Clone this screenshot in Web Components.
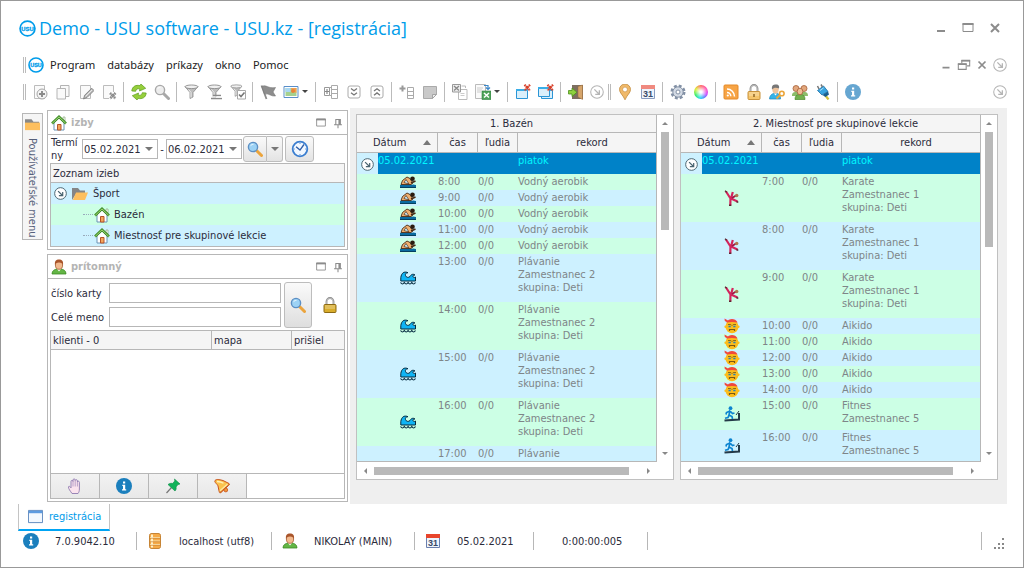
<!DOCTYPE html>
<html lang="sk">
<head>
<meta charset="utf-8">
<title>Demo - USU software</title>
<style>
  html, body { margin: 0; height: 100%; }
  body {
    --line: #b7b7b7;
    --soft: #f5f5f5;
    --sky: #cdf1ff;
    --mint: #ccffe5;
    --brand: #009cea;
    --title-font: "Open Sans", "Noto Sans", sans-serif;
    --menu-font: "Noto Sans", "Open Sans", sans-serif;
    font: 11px/13px "DejaVu Sans Condensed", "DejaVu Sans", sans-serif;
    color: #2b2b3b;
    background: #fff;
  }
</style>
</head>
<body>
<usu-window>
  <usu-titlebar slot="head" heading="Demo - USU software - USU.kz - [registrácia]"></usu-titlebar>
  <usu-menubar slot="head"></usu-menubar>
  <usu-toolbar slot="head"></usu-toolbar>
  <usu-side-tab slot="side">Používateľské menu</usu-side-tab>
  <usu-panel slot="dock" icon="house" heading="izby"><usu-rooms></usu-rooms></usu-panel>
  <usu-panel slot="dock" class="grow" icon="person" heading="prítomný"><usu-visitors></usu-visitors></usu-panel>
  <usu-schedule heading="1. Bazén" plan="pool" thumb="98"></usu-schedule>
  <usu-schedule heading="2. Miestnosť pre skupinové lekcie" plan="hall" thumb="115"></usu-schedule>
  <usu-tabs slot="foot">registrácia</usu-tabs>
  <usu-status slot="foot"></usu-status>
</usu-window>

<script>
/* ---------- icons, drawn on a 16 x 16 grid ---------- */
const page = '<path d="M2.500 1.500h10v13h-10z" fill="#fafafa" stroke="#bcbcbc"/>';
const house = '<path d="M3 8v7h10V8L8 3z" fill="#fff" stroke="#6b93b5"/><path d="M6.500 15V9.500h3.500V15z" fill="#f3a65a" stroke="#b5542a"/><path d="M12 2h2v4l-2-2z" fill="#fff" stroke="#7a9a6a" stroke-width=".6"/><path d="M1 8.500 8 1.800l7 6.700" fill="none" stroke="#3f8d28" stroke-width="2.600"/><path d="M1.300 8.300 8 1.900l6.700 6.400" fill="none" stroke="#a6d977" stroke-width="1"/>';
const calendar = top => `<path d="M1.500 1.500h13v13h-13z" fill="#eef4fc" stroke="${top[1]}"/><path d="M1 1h14v4H1z" fill="${top[0]}"/><text x="8" y="13" text-anchor="middle" font-family="Liberation Sans, sans-serif" font-weight="bold" font-size="9" fill="#3a4a66">31</text>`;
const funnel = '<path d="M1 2.500 6 8.500v6l3-1.500V8.500l5-6z" fill="#bdbdbd" stroke="#8c8c8c" stroke-width=".8"/><ellipse cx="7.500" cy="2.800" rx="6.500" ry="1.800" fill="#f0f0f0" stroke="#8c8c8c" stroke-width=".9"/><path d="M4.500 5.500 7 8.500v5" fill="none" stroke="#efefef"/>';
const lens = (f, s, h) => `<path d="m9.500 9.500 5 5" stroke="${h}" stroke-width="3" stroke-linecap="round"/><circle cx="6" cy="6" r="4.600" fill="${f}" stroke="${s}" stroke-width="1.400"/><path d="M3.200 5.500c.5-2 2-2.800 4-2.400-1.500.4-2.500 1.200-4 2.400z" fill="#fff"/>`;
const redX = '<path d="m9.500.8 5.500 5.700m0-5.700L9.500 6.500" stroke="#d8402a" stroke-width="2.200" stroke-dasharray="1.500 .4"/>';
const padlock = (f, s) => `<path d="M4.500 8V4.500a3.500 3.500 0 0 1 7 0V8" fill="none" stroke="#888" stroke-width="1.800"/><path d="M4.700 8V4.500a3.300 3.300 0 0 1 6.600 0V8" fill="none" stroke="#ddd" stroke-width=".6"/><rect x="2" y="7.500" width="12" height="8" rx="1" fill="${f}" stroke="${s}"/><path d="M3 9h10M3 11h10" stroke="#fff" stroke-opacity=".45"/>`;
const person = '<path d="M1 15c0-3.500 2.500-4.500 5-5h4c2.500.5 5 1.500 5 5z" fill="#63b545" stroke="#3c8a25" stroke-width=".8"/><path d="M6 10h4l-2 2.500z" fill="#fff"/><ellipse cx="8" cy="6" rx="3.600" ry="4.300" fill="#f2b98e" stroke="#a35a2b" stroke-width=".8"/><path d="M4 6C3.500 2 5 .6 8 .6S12.500 2 12 6c-.5-1.500-1.500-2.500-4-2.500S4.500 4.500 4 6z" fill="#a9552b"/>';
const infoDot = c => `<circle cx="8" cy="8" r="8" fill="${c}"/><path d="M7 3.500h2.200v2H7zM6.300 6.700h2.900v4.600h1V12.500H6v-1.200h1V7.900h-.7z" fill="#fff"/>`;
const chevBox = d => `<rect x="2" y="2" width="12" height="12" rx="2" fill="#fff" stroke="#aaa"/><path d="${d}" fill="none" stroke="#777" stroke-width="1.300"/>`;
const winFrame = (x, y) => `<path d="M${x}.5 ${y}.5h11v9h-11z" fill="#d9effb" stroke="#2a95d6"/><path d="M${x} ${y}h12v2h-12z" fill="#39aee8"/>`;
const ring = c => `<circle cx="8" cy="8" r="7.200" fill="#fff" stroke="${c}" stroke-width="1.200"/><path d="m5 5 5.500 5.500M10.700 6v4.700H6" fill="none" stroke="${c}" stroke-width="1.500"/>`;

const ICONS = {
  logo: '<circle cx="8" cy="8" r="7" fill="#fff" stroke="#009cea" stroke-width="1.600"/><text x="8" y="9.900" text-anchor="middle" font-family="Liberation Sans, sans-serif" font-weight="bold" font-size="5.500" fill="#009cea" stroke="#009cea" stroke-width=".3">USU</text>',
  add: page + '<circle cx="10" cy="10" r="5" fill="#f4f4f4" stroke="#a5a5a5"/><path d="M7 10h6M10 7v6" stroke="#8a8a8a" stroke-width="1.900"/>',
  copy: '<path d="M5.500 1.500h8.500v11h-8.500z" fill="#fafafa" stroke="#b4b4b4"/><path d="M2 4.500h8.500v10.500h-8.500z" fill="#fafafa" stroke="#b4b4b4"/>',
  edit: page + '<path d="m5.500 15 1.200-3.800 7-7 2.300 2.300-7 7z" fill="#b9b9b9" stroke="#808080" stroke-width=".9"/><path d="m7.500 12.500 6.500-6.500" stroke="#e8e8e8"/>',
  del: page + '<path d="M8 8h8v7H8z" fill="#fff"/><path d="m9 9 5.500 5.500m0-5.500L9 14.500" stroke="#8a8a8a" stroke-width="2.600" stroke-dasharray="1.500 .4"/>',
  refresh: '<path d="M.8 7c.3-4.500 4.200-6.500 8.200-5.300L9.900 0l4.800 4.300-6.200 2.700.4-2C6.500 4.300 5 5 4.700 7.300z" fill="#96cf3c" stroke="#5c9c1c" stroke-width=".7"/><path d="M15.200 9c-.3 4.500-4.200 6.500-8.200 5.300L6.100 16l-4.800-4.300 6.200-2.700-.4 2c2.400.7 3.900 0 4.200-2.300z" fill="#96cf3c" stroke="#5c9c1c" stroke-width=".7"/>',
  lensGrey: lens('#ededed', '#a8a8a8', '#a8a8a8'),
  lens: lens('#9cd2f5', '#5c8fc4', '#eba43c'),
  funnel,
  funnelLines: funnel + '<path d="M6 11.500h8M4 14.500h11" stroke="#8a8a8a" stroke-width="1.500"/><path d="M5 13h10" stroke="#fff"/>',
  funnelCheck: `<g transform="scale(.85)">${funnel}</g><path d="M7.500 6.500h8v8.500h-8z" fill="#fff" stroke="#a8a8a8"/><path d="m9 10.500 2 2 3.500-4" fill="none" stroke="#777" stroke-width="1.600"/>`,
  flag: '<path d="M1.500 1.500 6.500 15" stroke="#8b8b8b" stroke-width="1.800"/><path d="M1.800 2.500C6 0 8 5 15.500 3.500L13 8l2.500 4c-4 .8-6.500-3-11-2z" fill="#8d8d8d" stroke="#777" stroke-width=".6"/>',
  picture: '<path d="M1 2.500h14v11H1z" fill="#fff" stroke="#5a8fc9"/><path d="M2.500 4h11v8h-11z" fill="#a5d18f"/><path d="M2.500 4h5v4h-5z" fill="#a9d7f2"/><path d="M8 4h5.500v5L9 7z" fill="#f0a050"/><circle cx="10" cy="7" r="2" fill="#e9843a"/>',
  tree: '<path d="M8.500 1.500h6v13h-6zM8.500 5.500h6M8.500 9.500h6" fill="#fff" stroke="#aaa"/><path d="M1.500 3.500h5v8h-5z" fill="#fff" stroke="#999"/><path d="M4 5v5M2 7.500h4" stroke="#888" stroke-width="1.200"/><path d="M6.500 3.500h2M6.500 11.500h2" stroke="#aaa"/>',
  chevDown: chevBox('m5 4.500 3 2.300 3-2.300M5 8.700 8 11l3-2.300'),
  chevUp: chevBox('m5 7 3-2.300L11 7M5 11.200l3-2.300 3 2.300'),
  addRow: '<path d="M3.500 1.500v6M.5 4.500h6" stroke="#999" stroke-width="2"/><path d="M8.500 3.500h6v11h-6zM8.500 7.500h6M8.500 11.500h6" fill="#fff" stroke="#aaa"/>',
  note: '<path d="M1.500 2.500h13v8l-4 4h-9z" fill="#c9c9c9" stroke="#aaa"/><path d="M14.500 10.500h-4v4z" fill="#eee" stroke="#a5a5a5"/>',
  exportGrey: '<path d="M6.500 5.500h8.500v10h-8.500z" fill="#fff" stroke="#bbb"/><path d="M.5.500h8v7.500h-8z" fill="#eee" stroke="#999"/><path d="m2 2 5 4.500m0-4.500L2 6.500" stroke="#888" stroke-width="1.300"/><path d="M9.500 2h4v2" fill="none" stroke="#bbb"/><path d="M8.500 9.500h4M8.500 11.500h4" stroke="#ccc"/>',
  excel: '<path d="M.5.500h10v14H.5z" fill="#fafafa" stroke="#bbb"/><path d="M2 4h6M2 6h5M2 8h4" stroke="#ccc"/><path d="M7 7h9v8.500H7z" fill="#4fa35a" stroke="#2f8040" stroke-width=".6"/><path d="m9 9 5 4.500m0-4.500-5 4.500" stroke="#fff" stroke-width="1.500"/><path d="M9 1.500h4V5M11 3.500 13 5.500 15 3.500" fill="none" stroke="#3a86c8" stroke-width="1.200"/>',
  closeWin: winFrame(1, 5) + redX,
  closeAll: winFrame(3, 5) + winFrame(0, 3) + redX,
  door: '<path d="M4 1h11v14H4z" fill="#7d6e60"/><path d="m10 2.500 4.500-1.500v14.500L10 13z" fill="#d6a56b" stroke="#9a6b3a" stroke-width=".5"/><path d="M.5 6.500H4V4l5 4.300-5 4.200v-2.500H.5z" fill="#8ed13f" stroke="#4c8f1a" stroke-width=".8"/>',
  ring: ring('#b5b5b5'),
  ringDark: ring('#4a6470'),
  pin: '<path d="M8 15.800C6 11 2.500 9 2.500 5.500a5.500 5.500 0 0 1 11 0C13.500 9 10 11 8 15.800z" fill="#f0b96a" stroke="#c28a3c" stroke-width=".8"/><circle cx="8" cy="5.500" r="2.400" fill="#fff" stroke="#c28a3c" stroke-width=".6"/>',
  calendarSoft: calendar(['#f08a80', '#8a9cc0']),
  calendar: calendar(['#e8452c', '#6a7fae']),
  gear: '<circle cx="8" cy="8" r="6.300" fill="none" stroke="#8290a5" stroke-width="2.400" stroke-dasharray="2.900 2.050"/><circle cx="8" cy="8" r="5.200" fill="#d3dae4" stroke="#8290a5"/><circle cx="8" cy="8" r="2" fill="#fff" stroke="#8290a5"/>',
  wheel: '<foreignObject width="16" height="16"><div style="width:14px;height:14px;margin:1px;border-radius:50%;background:radial-gradient(circle,#fff 10%,#fff0 65%),conic-gradient(#f66,#f5b 60deg,#c4f 110deg,#58f 150deg,#2de 190deg,#3e6 240deg,#de3 300deg,#f66)"></div></foreignObject>',
  rss: '<rect x="1" y="1" width="14" height="14" rx="1" fill="#f7a445" stroke="#e58a28"/><path d="M4 8.500A3.800 3.800 0 0 1 7.800 12.300M4 5a7.500 7.500 0 0 1 7.500 7.500" fill="none" stroke="#fff" stroke-width="1.500"/><circle cx="4.800" cy="11.500" r="1.100" fill="#fff"/>',
  lockSoft: padlock('#f5c56c', '#c8923c') + '<path d="M8 10v3" stroke="#8a6020" stroke-width="1.400"/>',
  lockGold: padlock('#d9ad2c', '#8c6a14'),
  userKey: '<path d="M.5 15c0-3 2-5 4-5.500h4c2 .5 3 2.500 3 5.500z" fill="#35b3e8" stroke="#1d86bd" stroke-width=".7"/><path d="m5 9.500 1.500 2L8 9.500z" fill="#fff"/><ellipse cx="6.500" cy="5.500" rx="3.200" ry="4" fill="#eec39c"/><path d="M3 5.500C2.500 1.500 4 .5 7 .5s3.500 2 3 4C8 3.500 5 3 3 5.500z" fill="#777"/><circle cx="12.800" cy="9.500" r="2.300" fill="#fff" stroke="#eba53a" stroke-width="1.600"/><path d="m11 11-3.500 3.500" stroke="#eba53a" stroke-width="2"/>',
  group: '<path d="M0 12c0-3 1-4 4-4s4 1 4 4zM8 12c0-3 1-4 4-4s4 1 4 4z" fill="#8cbc6a"/><circle cx="4" cy="4.500" r="3" fill="#e3a77c" stroke="#a5603a" stroke-width=".8"/><circle cx="12" cy="4.500" r="3" fill="#e3a77c" stroke="#a5603a" stroke-width=".8"/><path d="M3 15.500c0-3.500 1.500-5 5-5s5 1.500 5 5z" fill="#73b04e" stroke="#4d8a2e" stroke-width=".7"/><ellipse cx="8" cy="7.500" rx="2.800" ry="3.300" fill="#f0bd94" stroke="#a5603a" stroke-width=".8"/>',
  plug: '<path d="m10 11 3.500 4.500" stroke="#d6c23a" stroke-width="2.200"/><path d="m2.500 6.500 6-4.500 4.500 5.500-6 3.500z" fill="#3aa6e0" stroke="#1d6fa5" stroke-width=".8"/><path d="M4 5 2.500 2M7.500 3 6 .5" stroke="#777" stroke-width="1.500"/><path d="m7.500 11 5.500-3.500 1 3-3.500 2.500z" fill="#1a5f8e"/><path d="m5 6.500 3.500-2.500" stroke="#b5e2fa"/>',
  infoSoft: infoDot('#66a6d1'),
  info: infoDot('#1b7fbd'),
  house, person,
  folder: '<path d="M0 2.500h7L9 5h6v3H0z" fill="#888"/><path d="M0 6h16v8H0z" fill="#fdbf5e"/>',
  folderOpen: '<path d="M0 2h6l2 2.500h5V8H4l-4 6z" fill="#858585"/><path d="M4 6.500h12L13 14H.8z" fill="#fdbf5e"/>',
  clock: '<circle cx="8" cy="8" r="6.500" fill="#f2f8ff" stroke="#3c7fd0" stroke-width="1.600"/><path d="m4.500 6 3.500 3 3.500-5" fill="none" stroke="#2f5ea8" stroke-width="1.200"/><path d="M8 2.500v1M8 12.500v1M2.500 8h1M12.500 8h1" stroke="#6d9cd8"/>',
  max: '<path d="M3 3.500h10v8H3z" fill="none" stroke="#8c8c8c" stroke-width="1"/><path d="M2.500 3h11v2h-11z" fill="#8c8c8c"/>',
  min: '<path d="M4 10h8v2H4z" fill="#8c8c8c"/>',
  restore: '<path d="M5.500 6V3h9v6h-3M1.500 7h9v6h-9z" fill="none" stroke="#8c8c8c" stroke-width="1.200"/><path d="M5 2h10v2H5zM1 6h10v2H1z" fill="#8c8c8c"/>',
  close: '<path d="m4 4 8 8m0-8-8 8" stroke="#8c8c8c" stroke-width="2"/>',
  tack: '<path d="M5.500 4h5v6h-5zM3.500 10h9M8 10v4" fill="none" stroke="#8c8c8c" stroke-width="1.200"/><path d="M8.500 3.500H11V10H8.500z" fill="#8c8c8c"/>',
  hand: '<path d="M5 15.500C3 12.500 1.500 11 1.500 9c0-1.200 1.500-.8 2.500.8V3.500c0-1.500 2-1.500 2 0V2c0-1.500 2.200-1.500 2.200 0v.5c.3-1.300 2.200-1 2.200.3V4c.3-1.200 2-1 2 .3V11c0 2-.6 3.500-1.400 4.500z" fill="#fbe3ee" stroke="#8e7bb0" stroke-width=".9"/><path d="M6 3.500V8.500M8.200 2.500v6M10.400 4v4.500" stroke="#a893c0" stroke-width=".8"/>',
  greenPin: '<path d="m6.500 9.500-5 5.500" stroke="#777" stroke-width="1.200"/><path d="m9.500 1 5.500 5-2 .5-2 2.500c.5 1.500 0 3-1 4L3 6.500C4.500 5.500 6 5 7.500 5.500L9.800 3z" fill="#12b35a" stroke="#0c8a44" stroke-width=".6"/>',
  bell: '<path d="M1 2.500C3 .5 6.500 2 9 2.500l6 3c.8.600.5 1.500-.5 2L7 14.500c-1 .6-1.800.3-1.800-.8L4 8C3.500 6 0 4.500 1 2.500z" fill="#fbc24c" stroke="#c9541d" stroke-width="1"/><path d="M14.800 6.500 6 14.500" stroke="#c9541d" stroke-width="1"/><path d="m13.500 6.200-7.500 6.500" stroke="#fbe9a0" stroke-width="1.500"/><path d="M3 3.500c2.500 0 4.500.5 6.500 1.800" stroke="#fff0b8" stroke-width="1.300" fill="none"/><circle cx="11.800" cy="12" r="1.900" fill="#f0953a" stroke="#c9541d" stroke-width=".8"/>',
  pageWin: '<path d="M.5 1.500h15v13H.5z" fill="#f3f8fe" stroke="#5c86bd"/><path d="M1 2h14v2.500H1z" fill="#5d9be0"/>',
  db: '<path d="M2.500 2.500c0-1.500 1-2 2.500-2h6c1.500 0 2.500.5 2.500 2v11c0 1.500-1 2-2.500 2H5c-1.500 0-2.500-.5-2.500-2z" fill="#f6ab48" stroke="#c07a28" stroke-width=".9"/><path d="M3 4.500h10M3 8h10M3 11.500h10" stroke="#fbe3ae"/><path d="M5 1.500v13" stroke="#fff0c8" stroke-width="2"/><path d="M3 5.300h10M3 8.800h10M3 12.300h10" stroke="#c98332" stroke-width=".7"/>',
  swimmer: '<path d="M0 11c2-.8 3.500-.8 5.300 0 1.800-.8 3.500-.8 5.300 0 1.800-.8 3.500-.8 5.400 0v3H0z" fill="#0a6aa0"/><path d="M0 13.500h16" stroke="#06405f"/><path d="m1 10.500 1.500-4L7 3l3 1.500L13 9l-2 1.500z" fill="#f0b070" stroke="#4a2a14" stroke-width=".9"/><path d="m4 8.500 2-3 3 4.500z" fill="#cdf1ff" stroke="#4a2a14" stroke-width=".7"/><path d="m11 9 4.500-2" stroke="#4a2a14" stroke-width="1.500"/><circle cx="12.500" cy="4.800" r="2.300" fill="#2a1a10"/>',
  wave: '<path d="M.8 11V7.500C1.500 3 4 1 8 2.700 6 2.700 5 4 5.500 5.500 6 7.500 8.500 8 10 6.500c1-2 3-3 5-1.500-2-.2-2.500 1-1.800 2 .7.800 1.600.5 2.300 0V11z" fill="#10b4f4" stroke="#062c40" stroke-width="1"/><path d="M.5 12.500c1.500 2 2.500 2 3.800 0 1.300 2 2.500 2 3.800 0 1.200 2 2.500 2 3.700 0 1.200 2 2.400 2 3.700 0" fill="none" stroke="#062c40" stroke-width="1.200"/>',
  kick: '<path d="M2 1.500 6.500 8.500 6.300 15.500M7 8.500l1.800-6.500M7 8.500l6.500 3" fill="none" stroke="#d4245c" stroke-width="2.200"/><path d="M1 .8l1.800 1.500M5 15.300h2.300M12.500 11.500l1.800.8" stroke="#5a2630" stroke-width="1.400"/><path d="m8 8 4-2.500" stroke="#a01846" stroke-width="2"/><circle cx="12.700" cy="5.500" r="1.700" fill="#b07850"/>',
  fighter: '<circle cx="8" cy="8.700" r="6.500" fill="#fcbd1c"/><circle cx="1.700" cy="8.700" r="1.300" fill="#fcbd1c"/><circle cx="14.300" cy="8.700" r="1.300" fill="#fcbd1c"/><path d="M2.300 4.500C3.500 2 6 1 8 1s4.500 1 5.700 3.500C10 3.700 6 3.700 2.300 4.500z" fill="#f0483c"/><path d="M.5.500 4 2.500 3.500 4.500.8 3z" fill="#f0483c"/><path d="M4 6.500h2.800l.8 1M12 6.500H9.200l-.8 1" fill="none" stroke="#8a6a1a" stroke-width="1"/><path d="M4.500 8.500h2.200M9.300 8.500h2.200" stroke="#2684b8" stroke-width="1.600"/><path d="M5.500 13v-1.500h5V13" fill="none" stroke="#7a5812" stroke-width="1.200"/>',
  treadmill: '<path d="M.5 14.500 15 13.500V7" fill="none" stroke="#243a48" stroke-width="2"/><path d="m12 9 3-4" stroke="#243a48"/><circle cx="6.500" cy="2.200" r="1.900" fill="#0c84d0"/><path d="M6 4.500 5 9l3 1.500.5 2.500M5.200 8.500 4 11.500l-3 .8M6 5 2.500 6.500 2 8.500M6.500 5.500 8.500 7.500l2-.5" fill="none" stroke="#0c84d0" stroke-width="1.700"/>',
};

/* ---------- base class: template in an open shadow root ---------- */
class Base extends HTMLElement {
  connectedCallback() {
    if (this.shadowRoot) return;
    const t = document.createElement('template');
    t.innerHTML = `<style>
      *, *::before, *::after { box-sizing: border-box; }
      :host { display: block; }
      button { font: inherit; color: inherit; margin: 0; padding: 0; border: 0; background: none; display: grid; place-items: center; }
      input { font: inherit; color: inherit; min-width: 0; margin: 0; border: 1px solid var(--line); border-radius: 0; background: #fff; padding: 0 2px; outline: 0; }
      ul { list-style: none; margin: 0; padding: 0; }
      table { border-collapse: separate; border-spacing: 0; table-layout: fixed; width: 100%; }
      th { font-weight: normal; } th, td { padding: 0; }
      ${this.css()}</style>${this.html()}`;
    this.attachShadow({ mode: 'open' }).append(t.content.cloneNode(true));
  }
  css() { return ''; }
  html() { return '<slot></slot>'; }
}
const icon = (name, size = 16) => `<usu-icon name="${name}" size="${size}"></usu-icon>`;

customElements.define('usu-icon', class extends Base {
  css() {
    const s = this.getAttribute('size') || 16;
    return `:host { display: block; flex: none; width: ${s}px; height: ${s}px; } svg { display: block; width: 100%; height: 100%; }`;
  }
  html() { return `<svg viewBox="0 0 16 16" aria-hidden="true">${ICONS[this.getAttribute('name')]}</svg>`; }
});

customElements.define('usu-window', class extends Base {
  css() { return `
    :host { display: flex; flex-direction: column; height: 100%; box-sizing: border-box; border: 1px solid #999; background: #fff; overflow: hidden; }
    main { flex: 1; min-height: 0; display: flex; padding: 0 16px 0 21px; }
    .dock { flex: none; width: 301px; margin: 2px 2px 2px 4px; display: flex; flex-direction: column; gap: 4px; }
    ::slotted(.grow) { flex: 1; min-height: 0; }
    .mdi { flex: 1; min-width: 0; display: grid; grid-template-columns: 1fr 1fr; gap: 6px; padding: 6px 9px 24px 6px; background: #efefef; }`; }
  html() { return `<header><slot name="head"></slot></header>
    <main><slot name="side"></slot><div class="dock"><slot name="dock"></slot></div><div class="mdi"><slot></slot></div></main>
    <footer><slot name="foot"></slot></footer>`; }
});

customElements.define('usu-titlebar', class extends Base {
  css() { return `
    :host { display: flex; align-items: center; height: 54px; padding: 0 20px 0 18px; }
    h1 { flex: 1; margin: 0 0 0 3px; font: 18px/24px var(--title-font); color: var(--brand); white-space: nowrap; }
    div { display: flex; gap: 11px; }`; }
  html() { return `${icon('logo', 17)}<h1>${this.getAttribute('heading')}</h1>
    <div><button aria-label="Minimalizovať">${icon('min')}</button><button aria-label="Maximalizovať">${icon('max')}</button><button aria-label="Zavrieť">${icon('close')}</button></div>`; }
});

customElements.define('usu-menubar', class extends Base {
  css() { return `
    :host { display: flex; align-items: center; height: 20px; padding: 0 16px 0 22px; }
    i { width: 3px; height: 16px; border: solid #bbb; border-width: 0 1px; margin-right: 2px; }
    nav { flex: 1; display: flex; gap: 12px; margin-left: 6px; font: 11px/16px var(--menu-font); color: #222; }
    div { display: flex; gap: 4px; align-items: center; }`; }
  html() { return `<i></i>${icon('logo')}<nav>${['Program', 'databázy', 'príkazy', 'okno', 'Pomoc'].map(t => `<button>${t}</button>`).join('')}</nav>
    <div><button aria-label="Minimalizovať">${icon('min', 14)}</button><button aria-label="Obnoviť">${icon('restore', 14)}</button><button aria-label="Zavrieť">${icon('close', 14)}</button><button aria-label="Viac">${icon('ring', 14)}</button></div>`; }
});

customElements.define('usu-toolbar', class extends Base {
  css() { return `
    :host { display: flex; align-items: center; height: 33px; padding: 0 16px 0 20px; }
    button { flex: none; width: 23px; height: 23px; }
    button.drop { width: 33px; grid-template-columns: 23px 10px; }
    button.drop::after { content: ""; border: solid transparent; border-width: 3px 3px 0; border-top-color: #444; margin-right: 4px; }
    button.end { width: 19px; }
    .sep { flex: none; width: 1px; height: 20px; margin: 0 3px; background: #bbb; }
    .grip { flex: none; width: 3px; height: 16px; margin: 0 2px; border: solid #bbb; border-width: 0 1px; }
    button:last-child { width: auto; margin-left: auto; }`; }
  html() {
    const tools = '= add copy edit del | refresh lensGrey | funnel funnelLines funnelCheck | flag picture* | tree chevDown chevUp | addRow note | exportGrey excel* | closeWin closeAll | door ring^ = pin calendarSoft | gear wheel | rss lockSoft userKey group plug | infoSoft ring^';
    return tools.split(' ').map(t => {
      if (t === '|') return '<span class="sep"></span>';
      if (t === '=') return '<span class="grip"></span>';
      const name = t.replace(/[*^]/, '');
      const cls = t.endsWith('*') ? 'drop' : t.endsWith('^') ? 'end' : '';
      return `<button class="${cls}" aria-label="${name}">${icon(name, cls === 'end' ? 14 : 16)}</button>`;
    }).join('');
  }
});

customElements.define('usu-side-tab', class extends Base {
  css() { return `
    :host { flex: none; width: 21px; margin-top: 5px; }
    button { width: 21px; display: flex; flex-direction: column; align-items: center; gap: 6px; padding: 3px 0 2px; border: 1px solid var(--line); background: var(--soft); color: #55607a; }
    span { writing-mode: vertical-rl; white-space: nowrap; }`; }
  html() { return `<button>${icon('folder', 15)}<span><slot></slot></span></button>`; }
});

customElements.define('usu-panel', class extends Base {
  css() { return `
    :host { display: flex; flex-direction: column; border: 1px solid var(--line); }
    header { flex: none; display: flex; align-items: center; height: 24px; padding: 0 2px 0 3px; border-bottom: 1px solid var(--line); }
    h2 { flex: 1; margin: 0 0 0 4px; font-size: 11px; line-height: 16px; color: #b4b4b4; }
    header button { margin-left: 3px; }
    slot { display: flex; flex-direction: column; flex: 1; min-height: 0; }`; }
  html() { return `<header>${icon(this.getAttribute('icon'))}<h2>${this.getAttribute('heading')}</h2>
    <button aria-label="Maximalizovať">${icon('max', 14)}</button><button aria-label="Pripnúť">${icon('tack', 14)}</button></header><slot></slot>`; }
});

customElements.define('usu-date', class extends Base {
  css() { return `
    :host { display: flex; height: 20px; border: 1px solid var(--line); box-sizing: border-box; }
    input { flex: 1; border: 0; padding: 0 0 0 1px; }
    button { width: 16px; }
    button::after { content: ""; border: solid transparent; border-width: 4px 4px 0; border-top-color: #777; }`; }
  html() { return `<input aria-label="${this.getAttribute('label')}" value="${this.getAttribute('value')}"><button aria-label="Kalendár"></button>`; }
});

customElements.define('usu-rooms', class extends Base {
  css() { return `
    form { display: flex; height: 28px; align-items: center; padding: 0 0 0 3px; }
    label { width: 31px; word-break: break-all; line-height: 13px; }
    usu-date { width: 76px; }
    b { font-weight: normal; width: 8px; text-align: center; }
    .split { display: flex; margin-left: 1px; }
    button.push { width: 29px; height: 26px; border: 1px solid #bdbdbd; border-radius: 3px; background: linear-gradient(#fafafa, #e3e3e3); }
    .split .push { width: 24px; border-radius: 3px 0 0 3px; }
    .split .more { width: 16px; border-left: 0; border-radius: 0 3px 3px 0; }
    .more::after { content: ""; border: solid transparent; border-width: 4px 4px 0; border-top-color: #777; }
    .clock { margin-left: 2px; }
    .frame { margin: 0 2px 2px; border: 1px solid var(--line); }
    th { height: 19px; text-align: left; padding: 0 2px; background: var(--soft); border-bottom: 1px solid var(--line); }
    td { height: 21px; background: var(--sky); }
    tr:nth-child(2) td { background: var(--mint); }
    td div { display: flex; align-items: center; gap: 4px; padding-left: 43px; }
    td div::before { content: ""; width: 10px; margin: 0 -3px 0 -11px; border-top: 1px dotted #9ab; }
    td div.root { padding-left: 3px; gap: 5px; }
    td div.root::before { display: none; }`; }
  html() { return `<form><label>Termíny</label><usu-date label="Termíny od" value="05.02.2021"></usu-date><b>-</b><usu-date label="Termíny do" value="06.02.2021"></usu-date>
    <span class="split"><button type="button" class="push" aria-label="Hľadať">${icon('lens')}</button><button type="button" class="push more" aria-label="Možnosti"></button></span>
    <button type="button" class="push clock" aria-label="Čas">${icon('clock', 18)}</button></form>
    <div class="frame"><table><thead><tr><th>Zoznam izieb</th></tr></thead><tbody>
      <tr><td><div class="root">${icon('ringDark', 13)}${icon('folderOpen')}Šport</div></td></tr>
      <tr><td><div>${icon('house')}Bazén</div></td></tr>
      <tr><td><div>${icon('house')}Miestnosť pre skupinové lekcie</div></td></tr></tbody></table></div>`; }
});

customElements.define('usu-visitors', class extends Base {
  css() { return `
    :host { display: flex; flex-direction: column; flex: 1; min-height: 0; }
    form { display: grid; grid-template-columns: 55px 1fr 28px 30px; grid-template-rows: 20px 20px; gap: 4px 3px; align-items: center; padding: 4px 2px 3px 3px; }
    form input { height: 20px; }
    label { white-space: nowrap; }
    .find { grid-area: 1 / 3 / 3 / 4; height: 46px; border: 1px solid #bdbdbd; border-radius: 3px; background: linear-gradient(#fafafa, #dedede); }
    .lock { grid-area: 1 / 4 / 3 / 5; justify-self: center; }
    .frame { flex: 1; min-height: 0; display: flex; flex-direction: column; margin: 0 2px; border: 1px solid var(--line); }
    th { height: 19px; text-align: left; padding: 0 2px; background: var(--soft); border: solid var(--line); border-width: 0 1px 1px 0; }
    th:last-child { border-right: 0; }
    .name { width: 161px; } .card { width: 80px; }
    .bar { display: flex; margin: 0 2px 2px; border: solid var(--line); border-width: 0 1px 1px; }
    .bar button { width: 49px; height: 24px; border-right: 1px solid var(--line); background: linear-gradient(#f2f2f2, #e8e8e8); }`; }
  html() { return `<form>
      <label for="card">číslo karty</label><input id="card">
      <label for="name">Celé meno</label><input id="name">
      <button type="button" class="find" aria-label="Hľadať">${icon('lens')}</button>
      <button type="button" class="lock" aria-label="Zamknúť">${icon('lockGold')}</button></form>
    <div class="frame"><table><thead><tr><th class="name">klienti - 0</th><th class="card">mapa</th><th>prišiel</th></tr></thead></table></div>
    <div class="bar">${['hand', 'info', 'greenPin', 'bell'].map(n => `<button aria-label="${n}">${icon(n)}</button>`).join('')}</div>`; }
});

/* ---------- schedules ---------- */
const repeat = (from, to, ic, lines) => Array.from({ length: to - from + 1 }, (_, i) => [`${from + i}:00`, ic, lines]);
const PLANS = {
  pool: [...repeat(8, 12, 'swimmer', ['Vodný aerobik']), ...repeat(13, 16, 'wave', ['Plávanie', 'Zamestnanec 2', 'skupina: Deti']), ['17:00', '', ['Plávanie']]],
  hall: [...repeat(7, 9, 'kick', ['Karate', 'Zamestnanec 1', 'skupina: Deti']), ...repeat(10, 14, 'fighter', ['Aikido']), ...repeat(15, 16, 'treadmill', ['Fitnes', 'Zamestnanec 5'])],
};

customElements.define('usu-schedule', class extends Base {
  css() { return `
    :host { display: grid; grid-template: minmax(0, 1fr) 17px / minmax(0, 1fr) 16px; min-height: 0; border: 1px solid #c0c0c0; background: #fff; color: #7e8588; box-sizing: border-box; }
    .view { overflow: hidden; border: solid var(--line); border-width: 0 1px 1px 0; }
    th { color: #2b2b3b; background: var(--soft); border: solid var(--line); border-width: 0 1px 1px 0; height: 20px; }
    th:last-child { border-right: 0; padding-left: 10px; }
    .caption th { height: 18px; }
    .date { display: flex; align-items: center; justify-content: space-between; padding: 0 6px 0 16px; }
    .date::after { content: ""; border: solid transparent; border-width: 0 4px 5px; border-bottom-color: #777; }
    td { vertical-align: top; padding-top: 1px; background: var(--mint); }
    tr:nth-child(odd) td { background: var(--sky); }
    td.pic { vertical-align: middle; padding: 0; }
    td.pic usu-icon { margin: 0 auto; }
    .l1 td { height: 16px; } .l2 td { height: 32px; } .l3 td { height: 48px; }
    tbody .day td { height: 21px; color: #00f6ff; background: #0082c8; }
    tbody .day td.knob { background: var(--sky); vertical-align: middle; padding-left: 4px; }
    .c0 { width: 21px; } .c1 { width: 60px; } .c2, .c3 { width: 40px; }
    .v, .h { display: flex; align-items: center; }
    .v { flex-direction: column; }
    .v::before, .v::after, .h::before, .h::after { content: ""; flex: none; border: 3px solid transparent; }
    .v::before { border-top-width: 0; border-bottom-color: #888; margin: 7px 0; }
    .v::after { border-bottom-width: 0; border-top-color: #888; margin: 7px 0; }
    .h::before { border-left-width: 0; border-right-color: #888; margin: 0 7px; }
    .h::after { border-right-width: 0; border-left-color: #888; margin: 0 7px; }
    .v i { width: 8px; flex: ${this.getAttribute('thumb')} 0 0px; background: #b9b9b9; }
    .v s { flex: ${313 - this.getAttribute('thumb')} 0 0px; }
    .h i { height: 8px; flex: 24 0 0px; background: #b9b9b9; } .h s { flex: 1 0 0px; }`; }
  html() {
    const rows = PLANS[this.getAttribute('plan')].map(([t, ic, l]) =>
      `<tr class="l${l.length}"><td></td><td class="pic">${ic && icon(ic)}</td><td>${t}</td><td>0/0</td><td>${l.join('<br>')}</td></tr>`).join('');
    return `<div class="view"><table><colgroup><col class="c0"><col class="c1"><col class="c2"><col class="c3"><col></colgroup>
      <thead><tr class="caption"><th colspan="5">${this.getAttribute('heading')}</th></tr>
      <tr><th colspan="2"><div class="date">Dátum</div></th><th>čas</th><th>ľudia</th><th>rekord</th></tr></thead>
      <tbody><tr class="day"><td class="knob">${icon('ringDark', 13)}</td><td colspan="3">05.02.2021</td><td>piatok</td></tr>${rows}</tbody></table></div>
      <div class="v"><i></i><s></s></div><div class="h"><i></i><s></s></div>`;
  }
});

customElements.define('usu-tabs', class extends Base {
  css() { return `
    :host { display: flex; height: 28px; padding-left: 17px; }
    button { display: flex; align-items: center; gap: 6px; height: 27px; padding: 0 8px 0 9px; color: var(--brand); border: solid #c4c4c4; border-width: 0 1px; border-bottom: 2px solid #00a4f4; }`; }
  html() { return `<button>${icon('pageWin', 15)}<slot></slot></button>`; }
});

customElements.define('usu-status', class extends Base {
  css() { return `
    :host { display: flex; height: 35px; padding: 0 17px; }
    ul { flex: 1; display: flex; height: 18px; }
    li { flex: none; display: flex; align-items: center; gap: 16px; padding-left: 10px; border-right: 1px solid var(--line); white-space: nowrap; }
    .a { width: 119px; padding-left: 5px; } .b { width: 135px; } .c { width: 143px; } .d { width: 119px; } .e { width: 114px; padding-left: 28px; }
    .end { margin-left: auto; }
    svg { flex: none; align-self: flex-start; width: 24px; height: 20px; }`; }
  html() { return `<ul><li class="a">${icon('info')}7.0.9042.10</li><li class="b">${icon('db')}localhost (utf8)</li><li class="c">${icon('person')}NIKOLAY (MAIN)</li><li class="d">${icon('calendar')}05.02.2021</li><li class="e">0:00:00:005</li><li class="end"></li></ul>
    <svg viewBox="0 0 24 20" fill="#888" aria-hidden="true"><path d="M20 6h2v2h-2zM16 11h2v2h-2zM20 11h2v2h-2zM12 15h2v2h-2zM16 15h2v2h-2zM20 15h2v2h-2z"/></svg>`; }
});
</script>
</body>
</html>
